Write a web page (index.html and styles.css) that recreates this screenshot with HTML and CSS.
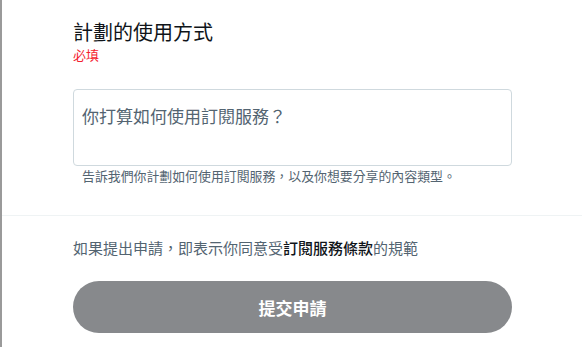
FILE: index.html
```html
<!DOCTYPE html>
<html>
  <head>
    <title>訂閱服務申請</title>
    <meta charset="utf-8" />
    <link rel="stylesheet" href="styles.css">
  </head>
  <body>
    <div class="page">
      <div class="section">
        <h2 class="title">計劃的使用方式</h2>
        <div class="required">必填</div>
        <div class="field">
          <textarea class="usage-input" placeholder="你打算如何使用訂閱服務？"></textarea>
          <div class="hint">告訴我們你計劃如何使用訂閱服務，以及你想要分享的內容類型。</div>
        </div>
      </div>
      <div class="footer">
        <p class="terms">如果提出申請，即表示你同意受<b>訂閱服務條款</b>的規範</p>
        <button class="submit-btn" disabled>提交申請</button>
      </div>
    </div>
  </body>
</html>
```

FILE: styles.css
```css
html,
body {
  margin: 0;
  padding: 0;
  background: #fff;
}

body {
  font-family: "Noto Sans CJK TC", "Noto Sans", sans-serif;
  color: #0f1419;
}

.page {
  height: 347px;
  border-left: 2px solid #9a9a9a;
  box-sizing: border-box;
}

.section {
  padding: 19px 70px 0 71px;
  height: 216px;
  box-sizing: border-box;
  border-bottom: 1px solid #eff3f4;
}

.title {
  margin: 0;
  font-size: 20px;
  font-weight: 400;
  line-height: 26px;
}

.required {
  color: #f4212e;
  font-size: 13px;
  line-height: 16px;
  margin-top: 2px;
}

.field {
  margin-top: 26px;
}

.usage-input {
  display: block;
  width: 100%;
  height: 77px;
  box-sizing: border-box;
  border: 1px solid #cfd9de;
  border-radius: 4px;
  padding: 14px 8px;
  font-family: inherit;
  font-size: 17px;
  line-height: 24px;
  resize: none;
  outline: none;
}

.usage-input::placeholder {
  color: #536471;
}

.hint {
  color: #536471;
  font-size: 12.9px;
  line-height: 16px;
  padding: 2px 9px 0;
}

.footer {
  padding: 0 70px 0 71px;
}

.terms {
  margin: 22px 0 0;
  color: #536471;
  font-size: 15px;
  line-height: 20px;
}

.terms b {
  color: #0f1419;
  font-weight: 500;
}

.submit-btn {
  display: block;
  width: 100%;
  height: 52px;
  margin-top: 23px;
  border: none;
  border-radius: 26px;
  background-color: #87898c;
  color: #fff;
  font-family: inherit;
  font-size: 17px;
  font-weight: 700;
}
```
